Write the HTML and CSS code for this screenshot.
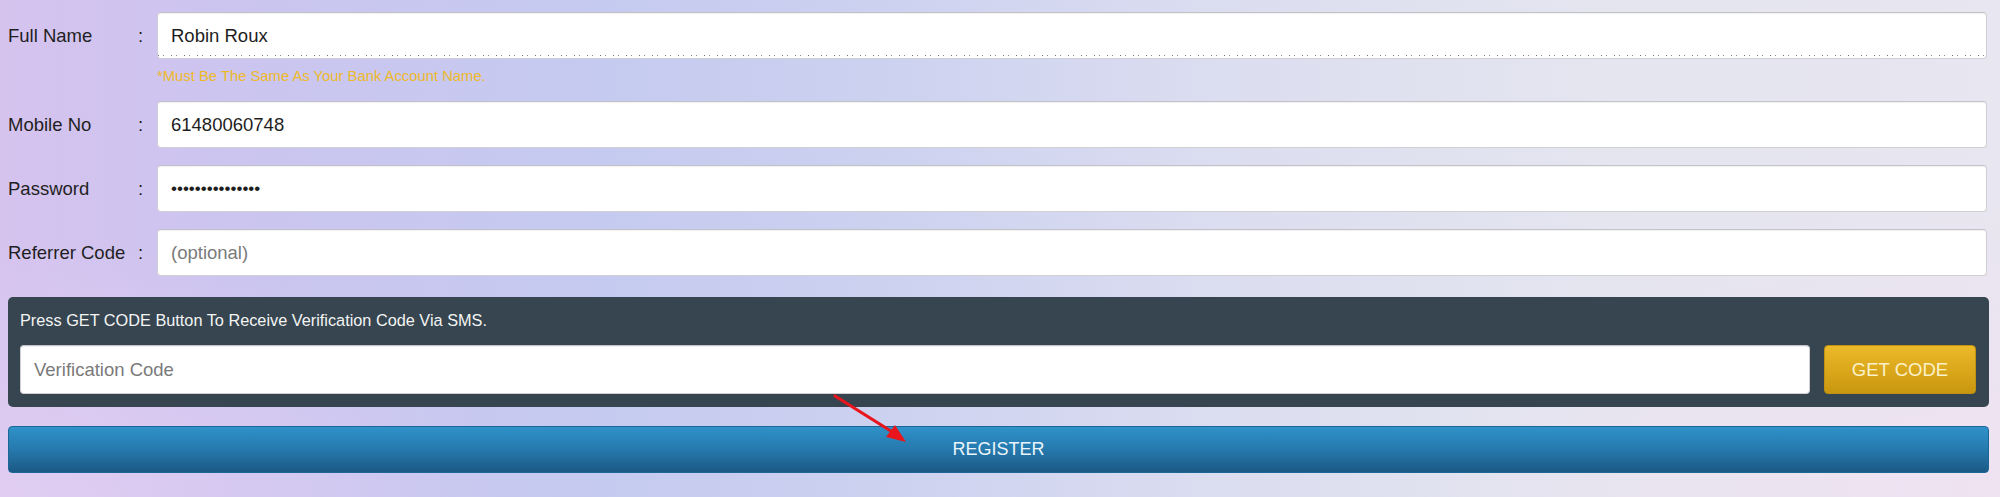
FILE: index.html
```html
<!DOCTYPE html>
<html lang="en">
<head>
<meta charset="utf-8">
<title>Register</title>
<link rel="stylesheet" href="styles.css">
</head>
<body>
<div class="page">
  <form class="form">
    <div class="row">
      <label class="label"><span class="label-text">Full Name</span><span class="colon">:</span></label>
      <input class="field field-dotted" type="text" value="Robin Roux">
    </div>
    <div class="hint">*Must Be The Same As Your Bank Account Name.</div>
    <div class="row">
      <label class="label"><span class="label-text">Mobile No</span><span class="colon">:</span></label>
      <input class="field" type="text" value="61480060748">
    </div>
    <div class="row">
      <label class="label"><span class="label-text">Password</span><span class="colon">:</span></label>
      <input class="field field-pass" type="password" value="robinroux123456">
    </div>
    <div class="row">
      <label class="label"><span class="label-text">Referrer Code</span><span class="colon">:</span></label>
      <input class="field" type="text" placeholder="(optional)">
    </div>
    <div class="verify">
      <p class="verify-text">Press GET CODE Button To Receive Verification Code Via SMS.</p>
      <div class="verify-row">
        <input class="field verify-field" type="text" placeholder="Verification Code">
        <button class="btn-code" type="button">GET CODE</button>
      </div>
    </div>
    <button class="btn-register" type="button">REGISTER</button>
  </form>
  <svg class="arrow" width="90" height="60" viewBox="0 0 90 60">
    <line x1="3" y1="2" x2="62" y2="39" stroke="#e8161c" stroke-width="3.2" stroke-linecap="round"/>
    <polygon points="74,48 54,43 63,31" fill="#e8161c"/>
  </svg>
</div>
</body>
</html>
```
FILE: styles.css
```css
* { box-sizing: border-box; }
html, body { margin: 0; padding: 0; }
body {
  width: 2000px;
  height: 497px;
  overflow: hidden;
  font-family: "Liberation Sans", Arial, sans-serif;
  background:
    radial-gradient(ellipse 500px 260px at 0% 100%, rgba(226, 206, 242, 0.9), rgba(226, 206, 242, 0) 100%),
    radial-gradient(ellipse 600px 300px at 100% 100%, rgba(240, 226, 242, 0.9), rgba(240, 226, 242, 0) 100%),
    linear-gradient(90deg, #d5c3ee 0%, #cbc5f0 12%, #c5caf0 30%, #cdd2f0 45%, #dcdef0 62%, #e4e5ef 80%, #e8e6f0 100%);
}
.page {
  position: relative;
  padding: 12px 0 0 8px;
}
.form {
  width: 1981px;
}
.row {
  display: flex;
  align-items: center;
  margin-bottom: 17px;
}
.row:first-child { margin-bottom: 0; }
.label {
  display: flex;
  width: 149px;
  flex: 0 0 149px;
  font-size: 18.5px;
  color: #1f1f1f;
}
.label-text { width: 130px; white-space: nowrap; }
.colon { width: 19px; }
.field {
  flex: 1;
  height: 47px;
  margin-right: 2px;
  border: 1px solid #cfcfd4;
  border-top-color: #c2c2c8;
  border-radius: 4px;
  background: #fff;
  padding: 0 13px;
  font-family: "Liberation Sans", Arial, sans-serif;
  font-size: 18.5px;
  color: #1e1e1e;
  outline: none;
  box-shadow: inset 0 1px 1px rgba(0, 0, 0, 0.06);
}
.field::placeholder { color: #7a7a7a; opacity: 1; }
.field-dotted {
  background-image: repeating-linear-gradient(90deg, #6f6f6f 0 1px, transparent 1px 5px, #8a8a8a 5px 6px, transparent 6px 13px);
  background-size: 100% 1px;
  background-position: left bottom 2px;
  background-repeat: no-repeat;
}
.field-pass { font-size: 17px; letter-spacing: 0; }
.hint {
  margin: 9px 0 17px 149px;
  height: 16px;
  line-height: 16px;
  font-size: 14.8px;
  color: #eeb92a;
}
.verify {
  margin-top: 21px;
  background: #36454f;
  border-radius: 5px;
  padding: 14px 13px 13px 12px;
}
.verify-text {
  margin: 0 0 16px 0;
  color: #f4f4f4;
  font-size: 16.3px;
  line-height: 18px;
}
.verify-row {
  display: flex;
  gap: 14px;
}
.verify-field {
  height: 49px;
  margin-right: 0;
}
.btn-code {
  flex: 0 0 152px;
  height: 49px;
  border: 1px solid #c0920f;
  border-radius: 4px;
  background: linear-gradient(180deg, #ebb92a 0%, #dba81c 50%, #c9970f 100%);
  color: #fbf1c8;
  font-family: "Liberation Sans", Arial, sans-serif;
  font-size: 18.5px;
  padding: 0;
}
.btn-register {
  display: block;
  width: 100%;
  height: 47px;
  margin-top: 19px;
  border: 1px solid #1d6797;
  border-radius: 4px;
  background: linear-gradient(180deg, #2f92c9 0%, #2679ad 50%, #1b5985 100%);
  color: #e9f4fb;
  font-family: "Liberation Sans", Arial, sans-serif;
  font-size: 18px;
  padding: 0;
}
.arrow {
  position: absolute;
  left: 832px;
  top: 394px;
}
```
